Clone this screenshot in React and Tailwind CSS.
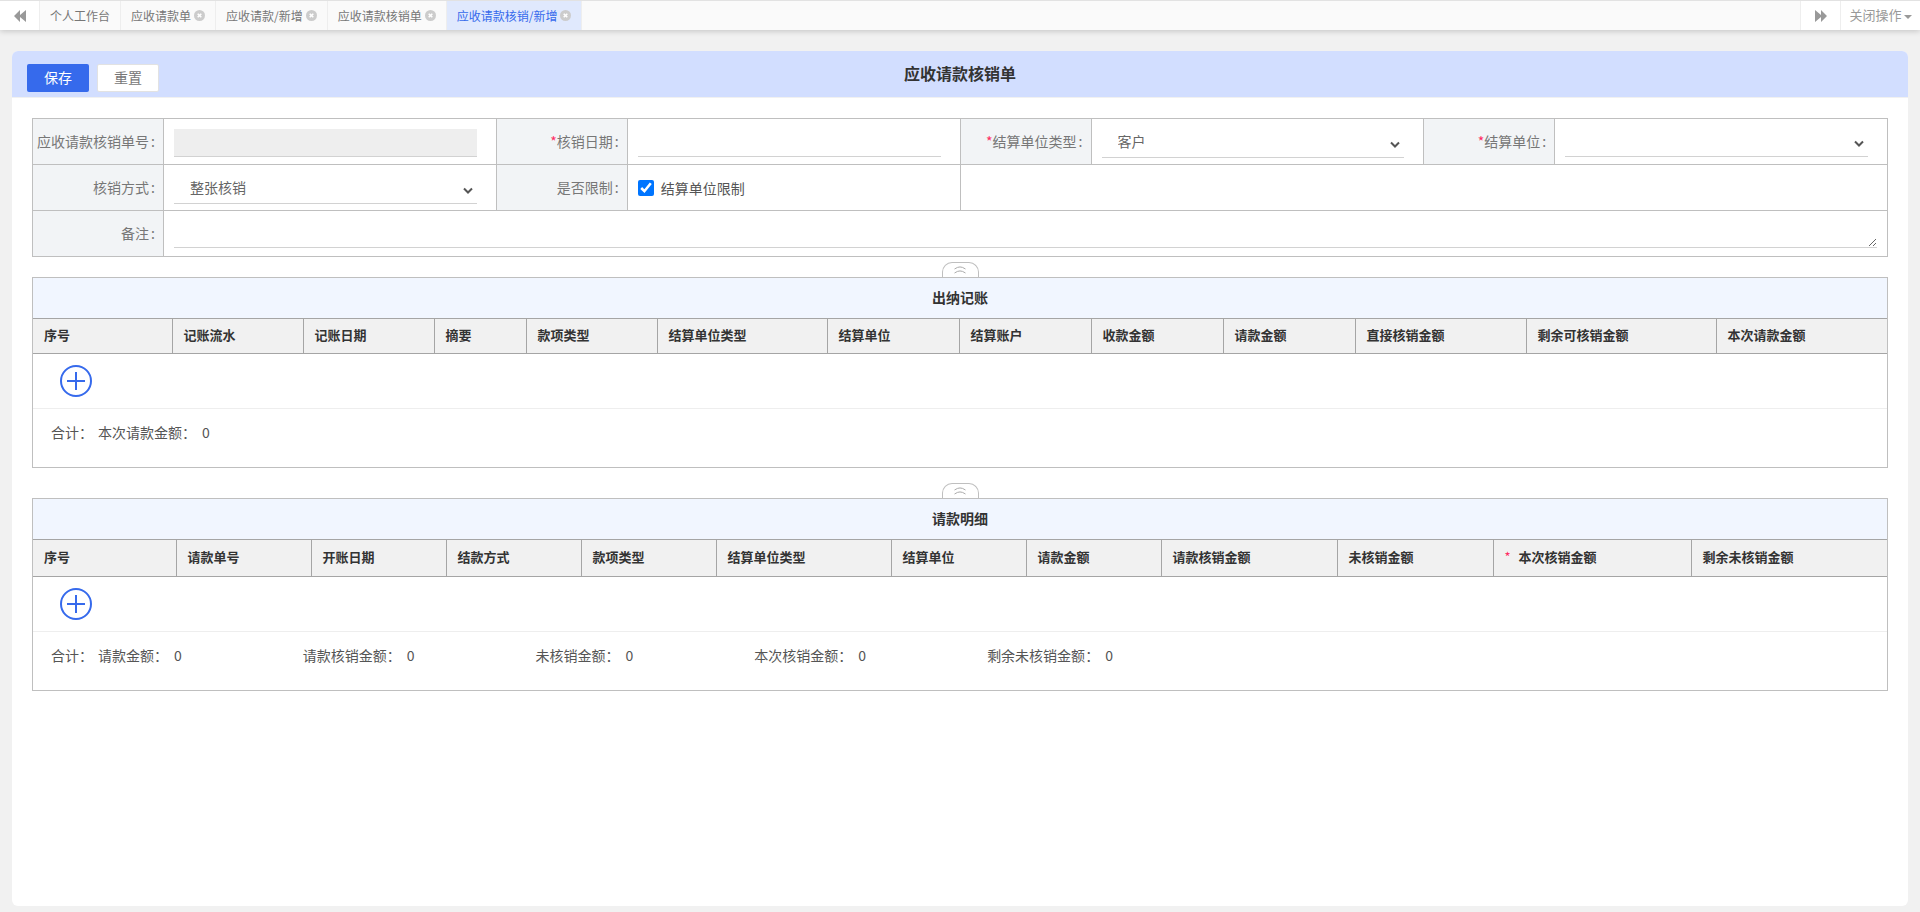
import { useState } from "react";

const tabs = [
  { name: "个人工作台", closable: false },
  { name: "应收请款单", closable: true },
  { name: "应收请款/新增", closable: true },
  { name: "应收请款核销单", closable: true },
  { name: "应收请款核销/新增", closable: true },
];

const cashierColumns = [
  { title: "序号", width: "w-[139px]" },
  { title: "记账流水", width: "w-[131px]" },
  { title: "记账日期", width: "w-[131px]" },
  { title: "摘要", width: "w-[92px]" },
  { title: "款项类型", width: "w-[131px]" },
  { title: "结算单位类型", width: "w-[170px]" },
  { title: "结算单位", width: "w-[132px]" },
  { title: "结算账户", width: "w-[132px]" },
  { title: "收款金额", width: "w-[132px]" },
  { title: "请款金额", width: "w-[132px]" },
  { title: "直接核销金额", width: "w-[171px]" },
  { title: "剩余可核销金额", width: "w-[190px]" },
  { title: "本次请款金额", width: "w-[171px]" },
];

const detailColumns = [
  { title: "序号", width: "w-[143px]" },
  { title: "请款单号", width: "w-[135px]" },
  { title: "开账日期", width: "w-[135px]" },
  { title: "结款方式", width: "w-[135px]" },
  { title: "款项类型", width: "w-[135px]" },
  { title: "结算单位类型", width: "w-[175px]" },
  { title: "结算单位", width: "w-[135px]" },
  { title: "请款金额", width: "w-[135px]" },
  { title: "请款核销金额", width: "w-[176px]" },
  { title: "未核销金额", width: "w-[156px]" },
  { title: "本次核销金额", width: "w-[198px]", required: true },
  { title: "剩余未核销金额", width: "w-[196px]" },
];

const cashierTotals = [{ label: "本次请款金额", value: 0 }];

const detailTotals = [
  { label: "请款金额", value: 0 },
  { label: "请款核销金额", value: 0 },
  { label: "未核销金额", value: 0 },
  { label: "本次核销金额", value: 0 },
  { label: "剩余未核销金额", value: 0 },
];

const CloseIcon = () => (
  <svg className="h-[11px] w-[11px]" viewBox="0 0 11 11" aria-hidden="true">
    <circle cx="5.5" cy="5.5" r="5.5" fill="#ccc" />
    <path d="M3.7 3.7l3.6 3.6M7.3 3.7L3.7 7.3" stroke="#fff" strokeWidth="1.6" />
  </svg>
);

const DoubleArrow = ({ left }) => (
  <svg
    className={left ? "h-3 w-3 rotate-180" : "h-3 w-3"}
    viewBox="0 0 12 12"
    fill="#999"
    aria-hidden="true"
  >
    <path d="M0 0L6 5V0L12 6L6 12V7L0 12Z" />
  </svg>
);

const TabBar = ({ active, onSelect }) => (
  <nav className="relative flex h-[30px] shrink-0 border-t border-[#e2e2e2] bg-[#fafafa] text-xs text-[#777] shadow-[0_1px_6px_rgba(0,0,0,0.2)]">
    <button
      className="flex w-10 items-center justify-center border-r border-[#eee] bg-white"
      aria-label="向左滚动"
    >
      <DoubleArrow left />
    </button>
    {tabs.map((tab, index) => (
      <div
        key={tab.name}
        className={`flex items-center gap-[3px] border-r border-[#eee] px-2.5 ${
          index === active ? "bg-[#e0e9fd] text-[#366aec]" : ""
        }`}
      >
        <button onClick={() => onSelect(index)}>{tab.name}</button>
        {tab.closable && (
          <button aria-label={`关闭${tab.name}`}>
            <CloseIcon />
          </button>
        )}
      </div>
    ))}
    <button
      className="ml-auto flex w-[41px] items-center justify-center border-x border-[#eee] bg-white"
      aria-label="向右滚动"
    >
      <DoubleArrow />
    </button>
    <button className="flex w-[79px] items-center justify-center gap-0.5 bg-white pb-0.5 text-[13px] text-[#999]">
      关闭操作
      <svg
        className="mt-1 h-1 w-2"
        viewBox="0 0 8 4"
        fill="#999"
        aria-hidden="true"
      >
        <path d="M0 0H8L4 4Z" />
      </svg>
    </button>
  </nav>
);

const LabelCell = ({ htmlFor, required, children }) => (
  <th className="border border-[#bfbfbf] bg-[#f2f4f6] pr-2 pb-0.5 text-right font-normal whitespace-nowrap text-[#777]">
    <label htmlFor={htmlFor}>
      {required && <span className="text-[#ff2d64]">*</span>}
      {children}
      <span className="ml-0.5">:</span>
    </label>
  </th>
);

const SelectBox = ({ id, options }) => (
  <div className="relative mr-[9px]">
    <select
      id={id}
      className="block h-7 w-full appearance-none border-b border-[#d2d2d2] bg-white px-4 pb-1 text-[#666] outline-none"
    >
      {options.map((option) => (
        <option key={option}>{option}</option>
      ))}
    </select>
    <svg
      className="pointer-events-none absolute top-[11px] right-1 h-2 w-2.5"
      viewBox="0 0 10 8"
      fill="none"
      stroke="#555"
      strokeWidth="2"
      aria-hidden="true"
    >
      <path d="M1 1.5L5 5.5L9 1.5" />
    </svg>
  </div>
);

const Section = ({ title, columns, totals, tall }) => {
  const [open, setOpen] = useState(true);

  return (
    <section>
      <button
        onClick={() => setOpen(!open)}
        className="mx-auto flex h-[15px] w-[37px] justify-center rounded-t-[10px] border border-b-0 border-[#bfbfbf] bg-white pt-[3px]"
        aria-label={`收起${title}`}
      >
        <svg
          className="h-2 w-3"
          viewBox="0 0 12 8"
          fill="none"
          stroke="#aaa"
          aria-hidden="true"
        >
          <path d="M0.5 3L3.5 1.4Q6 0.5 8.5 1.4L11.5 3M0.5 7L3.5 5.4Q6 4.5 8.5 5.4L11.5 7" />
        </svg>
      </button>
      <div className="border border-[#bfbfbf]">
        <h2 className="bg-[#f1f6ff] pb-0.5 text-center text-sm leading-[38px] font-bold text-[#333]">
          {title}
        </h2>
        {open && (
          <>
            <table className="w-full table-fixed border-collapse text-[13px] text-[#333]">
              <thead>
                <tr className={tall ? "h-[37px]" : "h-[35px]"}>
                  {columns.map((column) => (
                    <th
                      key={column.title}
                      className={`border border-[#a5a5a5] bg-[#f1f1f1] pr-2.5 pb-[3px] pl-[11px] text-left font-bold first:border-l-0 last:border-r-0 ${column.width}`}
                    >
                      {column.required && (
                        <span className="mr-2 font-normal text-[#ff2d64]">*</span>
                      )}
                      {column.title}
                    </th>
                  ))}
                </tr>
              </thead>
              <tbody>
                <tr className="h-[55px] border-b border-[#eee]">
                  <td colSpan={columns.length} className="pl-[27px]">
                    <button className="block" aria-label="新增一行">
                      <svg
                        className="h-8 w-8"
                        viewBox="0 0 32 32"
                        fill="none"
                        stroke="#366aec"
                        strokeWidth="2"
                        aria-hidden="true"
                      >
                        <circle cx="16" cy="16" r="15" />
                        <path d="M7 16H25M16 7V25" />
                      </svg>
                    </button>
                  </td>
                </tr>
              </tbody>
            </table>
            <div className="flex h-[58px] gap-[5px] px-[18px] pt-[13px] text-sm text-[#555]">
              <span>合计：</span>
              <div className="flex gap-[121px]">
                {totals.map((total) => (
                  <span key={total.label} className="flex gap-1.5">
                    <span>{total.label}：</span>
                    <span>{total.value}</span>
                  </span>
                ))}
              </div>
            </div>
          </>
        )}
      </div>
    </section>
  );
};

const App = () => {
  const [activeTab, setActiveTab] = useState(4);

  return (
    <div className="flex min-h-screen flex-col bg-[#f1f1f1] font-['Noto_Sans_CJK_SC',sans-serif]">
      <TabBar active={activeTab} onSelect={setActiveTab} />
      <main className="mx-3 mt-[21px] mb-1.5 grow overflow-hidden rounded-md bg-white">
        <header className="grid h-[47px] grid-cols-3 border-b border-[#f1f1f1] bg-[#d2deff] px-[15px]">
          <div className="flex items-start gap-2 pt-[13px] text-sm">
            <button className="h-7 w-[62px] rounded-xs bg-[#366aec] pb-0.5 text-white">
              保存
            </button>
            <button className="h-7 w-[62px] rounded-xs border border-[#e2e2e2] bg-white pb-0.5 text-[#777]">
              重置
            </button>
          </div>
          <h1 className="text-center text-base leading-[44px] font-bold text-[#333]">
            应收请款核销单
          </h1>
        </header>

        <div className="px-5 pt-5">
          {/* 单据信息 */}
          <table className="w-full table-fixed border-collapse text-sm text-[#666]">
            <colgroup>
              <col className="w-[131px]" />
              <col />
              <col className="w-[131px]" />
              <col />
              <col className="w-[131px]" />
              <col />
              <col className="w-[131px]" />
              <col />
            </colgroup>
            <tbody>
              <tr className="h-[46px]">
                <LabelCell htmlFor="billNo">应收请款核销单号</LabelCell>
                <td className="border border-[#bfbfbf] px-2.5 pt-0.5">
                  <div className="mr-[9px]">
                    <input
                      id="billNo"
                      disabled
                      className="block h-7 w-full border-b border-[#d2d2d2] bg-[#eee] px-2"
                    />
                  </div>
                </td>
                <LabelCell htmlFor="billDate" required>
                  核销日期
                </LabelCell>
                <td className="border border-[#bfbfbf] px-2.5 pt-0.5">
                  <div className="mr-[9px]">
                    <input
                      id="billDate"
                      className="block h-7 w-full border-b border-[#d2d2d2] px-2 outline-none"
                    />
                  </div>
                </td>
                <LabelCell htmlFor="unitType" required>
                  结算单位类型
                </LabelCell>
                <td className="border border-[#bfbfbf] px-2.5 pt-1">
                  <SelectBox id="unitType" options={["客户", "供应商"]} />
                </td>
                <LabelCell htmlFor="unit" required>
                  结算单位
                </LabelCell>
                <td className="border border-[#bfbfbf] px-2.5 pt-0.5">
                  <SelectBox id="unit" options={[""]} />
                </td>
              </tr>
              <tr className="h-[46px]">
                <LabelCell htmlFor="method">核销方式</LabelCell>
                <td className="border border-[#bfbfbf] px-2.5 pt-1">
                  <SelectBox id="method" options={["整张核销", "明细核销"]} />
                </td>
                <LabelCell htmlFor="limit">是否限制</LabelCell>
                <td className="border border-[#bfbfbf] px-2.5">
                  <label className="flex items-center gap-[7px] text-[#555]">
                    <input
                      id="limit"
                      type="checkbox"
                      defaultChecked
                      className="h-4 w-4 accent-[#0075ff]"
                    />
                    结算单位限制
                  </label>
                </td>
                <td colSpan={4} className="border border-[#bfbfbf]"></td>
              </tr>
              <tr className="h-[46px]">
                <LabelCell htmlFor="remark">备注</LabelCell>
                <td colSpan={7} className="border border-[#bfbfbf] px-2.5">
                  <textarea
                    id="remark"
                    className="block h-7 w-full resize-y border-b border-[#d2d2d2] px-2 outline-none"
                  />
                </td>
              </tr>
            </tbody>
          </table>

          <div className="mt-[5px] flex flex-col gap-[15px]">
            <Section
              title="出纳记账"
              columns={cashierColumns}
              totals={cashierTotals}
            />
            <Section
              title="请款明细"
              columns={detailColumns}
              totals={detailTotals}
              tall
            />
          </div>
        </div>
      </main>
    </div>
  );
};

export default App;
